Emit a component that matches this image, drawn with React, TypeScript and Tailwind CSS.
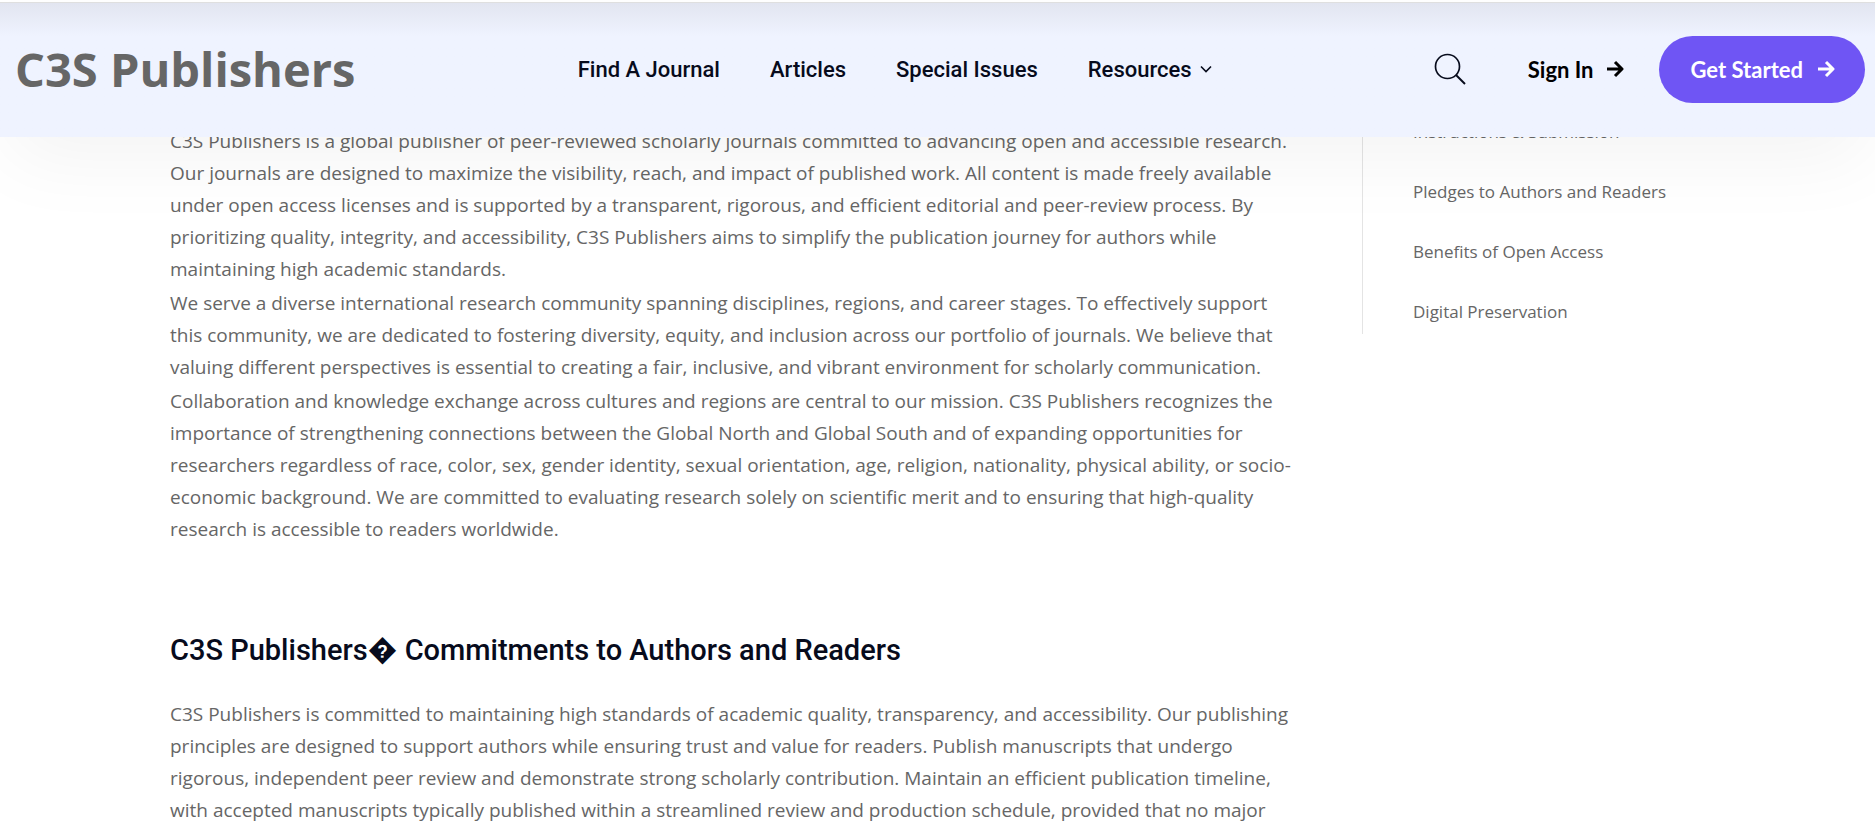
import React from 'react'

const navItems = ['Find A Journal', 'Articles', 'Special Issues']

const sidebarLinks = [
  'Instructions & Submission',
  'Pledges to Authors and Readers',
  'Benefits of Open Access',
  'Digital Preservation',
]

// Each paragraph is a list of lines so the breaks stay fixed
const aboutParagraphs = [
  [
    'C3S Publishers is a global publisher of peer-reviewed scholarly journals committed to advancing open and accessible research.',
    'Our journals are designed to maximize the visibility, reach, and impact of published work. All content is made freely available',
    'under open access licenses and is supported by a transparent, rigorous, and efficient editorial and peer-review process. By',
    'prioritizing quality, integrity, and accessibility, C3S Publishers aims to simplify the publication journey for authors while',
    'maintaining high academic standards.',
  ],
  [
    'We serve a diverse international research community spanning disciplines, regions, and career stages. To effectively support',
    'this community, we are dedicated to fostering diversity, equity, and inclusion across our portfolio of journals. We believe that',
    'valuing different perspectives is essential to creating a fair, inclusive, and vibrant environment for scholarly communication.',
  ],
  [
    'Collaboration and knowledge exchange across cultures and regions are central to our mission. C3S Publishers recognizes the',
    'importance of strengthening connections between the Global North and Global South and of expanding opportunities for',
    'researchers regardless of race, color, sex, gender identity, sexual orientation, age, religion, nationality, physical ability, or socio-',
    'economic background. We are committed to evaluating research solely on scientific merit and to ensuring that high-quality',
    'research is accessible to readers worldwide.',
  ],
]

const commitmentParagraphs = [
  [
    'C3S Publishers is committed to maintaining high standards of academic quality, transparency, and accessibility. Our publishing',
    'principles are designed to support authors while ensuring trust and value for readers. Publish manuscripts that undergo',
    'rigorous, independent peer review and demonstrate strong scholarly contribution. Maintain an efficient publication timeline,',
    'with accepted manuscripts typically published within a streamlined review and production schedule, provided that no major',
  ],
]

const ArrowIcon = () => (
  <svg width="18" height="18" viewBox="0 0 18 18" fill="none" stroke="currentColor" strokeWidth="3" aria-hidden="true">
    <path d="M1 9h15M9 2l7 7-7 7" strokeLinejoin="round" />
  </svg>
)

const Paragraphs = ({ items }: { items: string[][] }) => (
  <div className="space-y-0.5 text-[19px] leading-8 text-[#666666]">
    {items.map((lines, i) => (
      <p key={i}>
        {lines.map((line) => (
          <span key={line} className="block whitespace-nowrap">
            {line}
          </span>
        ))}
      </p>
    ))}
  </div>
)

const Header = () => (
  <header className="relative z-10 mt-0.5 flex h-[135px] items-center justify-between border-t border-[#dfdfdf] bg-[#eff3ff] bg-linear-to-b from-[#e2e5f0] to-[#eff3ff] to-25% pr-[10px] pb-0.5 pl-[15px] shadow-[0_30px_80px_-10px_rgba(0,0,0,0.05)]">
    <a href="#" className="text-[47px] font-bold text-[#666666]">
      C3S Publishers
    </a>

    {/* Menu */}
    <nav className="flex items-center gap-[50px] font-['Roboto',sans-serif] text-[22px] font-medium text-[#070b1c]">
      {navItems.map((item) => (
        <a key={item} href="#">
          {item}
        </a>
      ))}
      <button type="button" className="flex items-center gap-2">
        Resources
        <svg width="12" height="8" viewBox="0 0 12 8" fill="none" stroke="currentColor" strokeWidth="1.6" aria-hidden="true">
          <path d="M1 1.5l5 5 5-5" />
        </svg>
      </button>
    </nav>

    {/* Actions */}
    <div className="flex items-center font-['Lato',sans-serif] text-[22px] font-bold">
      <button type="button" aria-label="Search" className="mr-[62px] text-[#070b1c]">
        <svg width="32" height="32" viewBox="0 0 32 32" fill="none" stroke="currentColor" strokeWidth="1.7" aria-hidden="true">
          <circle cx="13.5" cy="13.5" r="12" />
          <path d="M22 22l9 9" strokeWidth="2" />
        </svg>
      </button>
      <a href="#" className="mr-[35px] flex items-center gap-3 text-black">
        Sign In
        <ArrowIcon />
      </a>
      <a href="#" className="flex h-[67px] items-center gap-[14px] rounded-full bg-[#6f55f4] pr-[30px] pl-8 text-white">
        Get Started
        <ArrowIcon />
      </a>
    </div>
  </header>
)

const App = () => {
  return (
    <div className="h-screen overflow-hidden bg-white font-['Open_Sans',sans-serif]">
      <Header />

      <main className="mx-auto -mt-9 flex max-w-[1535px] items-start">
        <article className="flex-1 pt-6">
          <Paragraphs items={aboutParagraphs} />
          <h2 className="mt-[85px] mb-7 font-['Roboto',sans-serif] text-[29px] leading-10 font-medium text-[#070b1c]">
            C3S Publishers{'\uFFFD'} Commitments to Authors and Readers
          </h2>
          <Paragraphs items={commitmentParagraphs} />
        </article>

        <aside className="w-[343px] border-l border-[#e4e4e4] pt-4 pb-[7px] pl-[50px]">
          <ul className="space-y-[30px] text-[17px] leading-[30px] text-[#666666]">
            {sidebarLinks.map((link) => (
              <li key={link}>
                <a href="#">{link}</a>
              </li>
            ))}
          </ul>
        </aside>
      </main>
    </div>
  )
}

export default App
